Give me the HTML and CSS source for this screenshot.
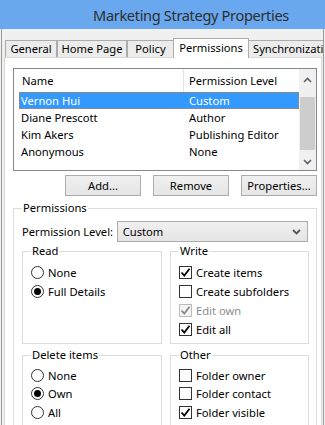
FILE: index.html
```html
<!DOCTYPE html>
<html lang="en">
<head>
  <meta charset="UTF-8">
  <title>Marketing Strategy Properties</title>
  <link rel="stylesheet" href="styles.css">
</head>
<body>
  <div class="titlebar">Marketing Strategy Properties</div>

  <div class="frame">
    <div class="tabs">
      <div class="tab tab-general">General</div>
      <div class="tab tab-home">Home Page</div>
      <div class="tab tab-policy">Policy</div>
      <div class="tab tab-active">Permissions</div>
      <div class="tab tab-sync">Synchronizati</div>
    </div>

    <div class="panel">
      <div class="listbox">
        <div class="list-body">
          <div class="list-head">
            <div class="head-cell head-name">Name</div>
            <div class="head-cell head-level">Permission Level</div>
          </div>
          <div class="row selected"><span>Vernon Hui</span><span>Custom</span></div>
          <div class="row"><span>Diane Prescott</span><span>Author</span></div>
          <div class="row"><span>Kim Akers</span><span>Publishing Editor</span></div>
          <div class="row"><span>Anonymous</span><span>None</span></div>
        </div>
        <div class="scrollbar">
          <svg class="arrow" width="9" height="6" viewBox="0 0 9 6"><path d="M1 5 L4.5 1.5 L8 5" fill="none" stroke="#606060" stroke-width="1.6"/></svg>
          <div class="thumb"></div>
          <svg class="arrow" width="9" height="6" viewBox="0 0 9 6"><path d="M1 1 L4.5 4.5 L8 1" fill="none" stroke="#606060" stroke-width="1.6"/></svg>
        </div>
      </div>

      <div class="buttons">
        <button class="btn">Add...</button>
        <button class="btn">Remove</button>
        <button class="btn">Properties...</button>
      </div>

      <fieldset class="group perms">
        <legend>Permissions</legend>
        <div class="level-row">
          <span class="level-label">Permission Level:</span>
          <div class="select">
            <span>Custom</span>
            <svg width="9" height="6" viewBox="0 0 9 6"><path d="M1 1 L4.5 4.5 L8 1" fill="none" stroke="#555" stroke-width="1.8"/></svg>
          </div>
        </div>

        <div class="subgroups">
          <fieldset class="group sub">
            <legend>Read</legend>
            <div class="opt"><span class="radio"></span>None</div>
            <div class="opt"><span class="radio on"></span>Full Details</div>
          </fieldset>
          <fieldset class="group sub">
            <legend>Write</legend>
            <div class="opt"><span class="check on"><svg width="11" height="11" viewBox="0 0 11 11"><path d="M1.5 5.5 L4.3 8.6 L9.5 1.8" fill="none" stroke="#000" stroke-width="1.8"/></svg></span>Create items</div>
            <div class="opt"><span class="check"></span>Create subfolders</div>
            <div class="opt disabled"><span class="check on"><svg width="11" height="11" viewBox="0 0 11 11"><path d="M1.5 5.5 L4.3 8.6 L9.5 1.8" fill="none" stroke="#8a8a8a" stroke-width="1.8"/></svg></span>Edit own</div>
            <div class="opt"><span class="check on"><svg width="11" height="11" viewBox="0 0 11 11"><path d="M1.5 5.5 L4.3 8.6 L9.5 1.8" fill="none" stroke="#000" stroke-width="1.8"/></svg></span>Edit all</div>
          </fieldset>
          <fieldset class="group sub lower">
            <legend>Delete items</legend>
            <div class="opt"><span class="radio"></span>None</div>
            <div class="opt"><span class="radio on"></span>Own</div>
            <div class="opt"><span class="radio"></span>All</div>
          </fieldset>
          <fieldset class="group sub lower">
            <legend>Other</legend>
            <div class="opt"><span class="check"></span>Folder owner</div>
            <div class="opt"><span class="check"></span>Folder contact</div>
            <div class="opt"><span class="check on"><svg width="11" height="11" viewBox="0 0 11 11"><path d="M1.5 5.5 L4.3 8.6 L9.5 1.8" fill="none" stroke="#000" stroke-width="1.8"/></svg></span>Folder visible</div>
          </fieldset>
        </div>
      </fieldset>
    </div>
  </div>
</body>
</html>
```

FILE: styles.css
```css
* {
  box-sizing: border-box;
}

body {
  margin: 0;
  width: 325px;
  height: 425px;
  overflow: hidden;
  background: #f0f0f0;
  font-family: 'Noto Sans', sans-serif;
  font-size: 11.2px;
  color: #000;
}

.titlebar {
  height: 29px;
  line-height: 30px;
  padding-left: 93px;
  background: #69a8ee;
  color: #2e2e2e;
  font-size: 14.6px;
  letter-spacing: -0.35px;
  white-space: nowrap;
}

.frame {
  margin-left: 1px;
  border-left: 1px solid #9a9a9a;
  border-right: 1px solid #9a9a9a;
  padding-left: 2px;
  width: 323px;
  height: 396px;
  overflow: hidden;
}

/* tabs */
.tabs {
  display: flex;
  align-items: flex-end;
  height: 28px;
  padding-left: 1px;
  white-space: nowrap;
}

.tab {
  flex: none;
  height: 17px;
  line-height: 16px;
  text-align: center;
  border: 1px solid #acacac;
  border-bottom: none;
  background: #ececec;
}

.tab-general { width: 52px; }
.tab-home { width: 70px; }
.tab-policy { width: 46px; border-right: none; }
.tab-active {
  width: 76px;
  height: 20px;
  line-height: 17px;
  background: #fff;
  margin-bottom: -1px;
  position: relative;
  z-index: 1;
}
.tab-sync { width: 80px; border-left: none; text-align: left; padding-left: 4px; overflow: hidden; }

/* panel */
.panel {
  width: 318px;
  height: 370px;
  border: 1px solid #d9d9d9;
  background: #fff;
  padding: 10px 0 0 8px;
}

.listbox {
  display: flex;
  width: 304px;
  height: 103px;
  border: 1px solid #828790;
}

.list-body {
  flex: 1;
}

.list-head {
  display: flex;
  height: 23px;
  line-height: 23px;
}

.head-cell {
  padding-left: 8px;
}

.head-name { width: 169px; }
.head-level { border-left: 1px solid #e5e5e5; padding-left: 5px; flex: 1; }

.row {
  display: grid;
  grid-template-columns: 168px 1fr;
  margin-left: 5px;
  height: 17px;
  line-height: 17px;
  padding-left: 2px;
}

.row.selected {
  background: #3399ff;
  color: #fff;
  outline: 1px dotted #d6802e;
  outline-offset: -1px;
}

.scrollbar {
  width: 17px;
  background: #f0f0f0;
  display: flex;
  flex-direction: column;
  align-items: center;
  padding-top: 8px;
}

.scrollbar .arrow {
  display: block;
}

.thumb {
  width: 15px;
  height: 53px;
  background: #cdcdcd;
  margin: 14px 0 9px;
}

/* buttons */
.buttons {
  display: flex;
  justify-content: flex-end;
  gap: 12px;
  width: 304px;
  margin-top: 4px;
}

.btn {
  width: 76px;
  height: 21px;
  padding: 0;
  font: inherit;
  color: #000;
  background: linear-gradient(#f0f0f0, #e5e5e5);
  border: 1px solid #acacac;
}

/* groups */
.group {
  margin: 0;
  border: 1px solid #dcdcdc;
  padding: 0 8px;
  min-width: 0;
}

.group legend {
  padding: 0 1px;
  line-height: 16px;
}

.perms {
  width: 304px;
  height: 240px;
  margin-top: 4px;
}

.level-row {
  display: flex;
  align-items: center;
  margin-top: 5px;
  height: 21px;
  white-space: nowrap;
}

.level-label {
  width: 95px;
}

.select {
  display: flex;
  align-items: center;
  justify-content: space-between;
  width: 192px;
  height: 21px;
  padding: 0 6px 0 5px;
  border: 1px solid #acacac;
  background: linear-gradient(#f0f0f0, #e5e5e5);
}

.subgroups {
  display: grid;
  grid-template-columns: 140px 139px;
  column-gap: 8px;
  row-gap: 3px;
  margin-top: 1px;
}

.sub {
  padding: 4px 8px 4px 8px;
}

.sub.lower {
  padding-top: 3px;
}

.lower .opt {
  height: 18.5px;
}

.opt {
  display: flex;
  align-items: center;
  height: 19px;
  white-space: nowrap;
}

.opt.disabled {
  color: #8d8d8d;
}

.radio {
  width: 13px;
  height: 13px;
  border: 1px solid #333;
  border-radius: 50%;
  background: #fff;
  margin-right: 4px;
  display: flex;
  align-items: center;
  justify-content: center;
}

.radio.on::after {
  content: "";
  width: 7px;
  height: 7px;
  border-radius: 50%;
  background: #000;
}

.check {
  width: 13px;
  height: 13px;
  border: 1px solid #333;
  background: #fff;
  margin-right: 4px;
  display: flex;
  align-items: center;
  justify-content: center;
}

.disabled .check {
  border-color: #bcbcbc;
  background: #f4f4f4;
}
```
